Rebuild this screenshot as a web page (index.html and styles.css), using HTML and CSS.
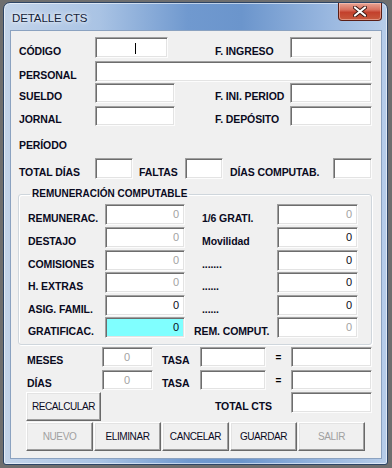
FILE: index.html
```html
<!DOCTYPE html>
<html lang="es">
<head>
    <meta charset="UTF-8"/>
    <title>Detalle CTS</title>
<link rel="stylesheet" href="styles.css">
</head>
<body>
    <div class="window">
        <!-- Title bar -->
        <div class="titlebar">
            <span class="title">DETALLE CTS</span>
            <span class="close">
                <svg width="14" height="11" viewBox="0 0 14 11">
                    <path d="M2 1.5 L12 9.5 M12 1.5 L2 9.5" stroke="#3a1a16" stroke-width="4" stroke-linecap="round"/>
                    <path d="M2 1.5 L12 9.5 M12 1.5 L2 9.5" stroke="#fff" stroke-width="2.2" stroke-linecap="round"/>
                </svg>
            </span>
        </div>

        <div class="client">
            <!-- Datos del trabajador -->
            <div class="row h21">
                <span class="lbl w76">CÓDIGO</span>
                <div class="txt w73"><span class="caret"></span></div>
                <span class="lbl w75 ml47">F. INGRESO</span>
                <div class="txt w82"></div>
            </div>
            <div class="row h21 mt3">
                <span class="lbl w76">PERSONAL</span>
                <div class="txt w277"></div>
            </div>
            <div class="row h20 mt1">
                <span class="lbl w76">SUELDO</span>
                <div class="txt w80"></div>
                <span class="lbl w75 ml40">F. INI. PERIOD</span>
                <div class="txt w82"></div>
            </div>
            <div class="row h20 mt3">
                <span class="lbl w76">JORNAL</span>
                <div class="txt w80"></div>
                <span class="lbl w75 ml40">F. DEPÓSITO</span>
                <div class="txt w82"></div>
            </div>
            <div class="row h20 mt6">
                <span class="lbl w76">PERÍODO</span>
            </div>
            <div class="row h21 mt6">
                <span class="lbl w76">TOTAL DÍAS</span>
                <div class="txt w38"></div>
                <span class="lbl w46 ml6">FALTAS</span>
                <div class="txt w38"></div>
                <span class="lbl w103 ml7">DÍAS COMPUTAB.</span>
                <div class="txt w39"></div>
            </div>

            <!-- Remuneracion computable -->
            <fieldset class="group">
                <legend>REMUNERACIÓN COMPUTABLE</legend>
                <div class="row h21">
                    <span class="lbl w77">REMUNERAC.</span>
                    <div class="txt w80 num off">0</div>
                    <span class="lbl w75 ml17">1/6 GRATI.</span>
                    <div class="txt w81 num off">0</div>
                </div>
                <div class="row h21 mt2">
                    <span class="lbl w77">DESTAJO</span>
                    <div class="txt w80 num off">0</div>
                    <span class="lbl w75 ml17">Movilidad</span>
                    <div class="txt w81 num">0</div>
                </div>
                <div class="row h21 mt2">
                    <span class="lbl w77">COMISIONES</span>
                    <div class="txt w80 num off">0</div>
                    <span class="lbl w75 ml17">.......</span>
                    <div class="txt w81 num">0</div>
                </div>
                <div class="row h21 mt1">
                    <span class="lbl w77">H. EXTRAS</span>
                    <div class="txt w80 num off">0</div>
                    <span class="lbl w75 ml17">......</span>
                    <div class="txt w81 num">0</div>
                </div>
                <div class="row h21 mt2">
                    <span class="lbl w77">ASIG. FAMIL.</span>
                    <div class="txt w80 num">0</div>
                    <span class="lbl w75 ml17">......</span>
                    <div class="txt w81 num">0</div>
                </div>
                <div class="row h21 mt1">
                    <span class="lbl w77">GRATIFICAC.</span>
                    <div class="txt w80 num cyan">0</div>
                    <span class="lbl w83 ml9">REM. COMPUT.</span>
                    <div class="txt w81 num off">0</div>
                </div>
            </fieldset>

            <!-- Calculo -->
            <div class="row h20 mt2">
                <span class="lbl w75 ml8">MESES</span>
                <div class="txt w51 center off">0</div>
                <span class="lbl w38 ml9">TASA</span>
                <div class="txt w66"></div>
                <span class="eq">=</span>
                <div class="txt w81"></div>
            </div>
            <div class="row h20 mt3">
                <span class="lbl w75 ml8">DÍAS</span>
                <div class="txt w51 center off">0</div>
                <span class="lbl w38 ml9">TASA</span>
                <div class="txt w66"></div>
                <span class="eq">=</span>
                <div class="txt w81"></div>
            </div>
            <div class="row top mt2">
                <span class="btn recalc">RECALCULAR</span>
                <span class="lbl w76 ml114 tot">TOTAL CTS</span>
                <div class="txt w81 tall"></div>
            </div>
            <div class="buttons">
                <span class="btn disabled">NUEVO</span>
                <span class="btn">ELIMINAR</span>
                <span class="btn">CANCELAR</span>
                <span class="btn">GUARDAR</span>
                <span class="btn disabled">SALIR</span>
            </div>
        </div>
    </div>
</body>
</html>
```

FILE: styles.css
```css
* {
    margin: 0;
    padding: 0;
    box-sizing: border-box;
}

body {
    width: 392px;
    height: 468px;
    overflow: hidden;
    background: #6e6e6e;
    font: 11px "Liberation Sans", Arial, sans-serif;
    color: #000;
}

/* Aero style window frame */
.window {
    width: 385px;
    height: 463px;
    margin: 2px 0 0 3px;
    padding: 0 5px 5px 6px;
    border: 1px solid #2d4566;
    border-radius: 7px 7px 3px 3px;
    background: linear-gradient(90deg, #c3d4ea 0%, #a9c3e4 25%, #7099cf 48%, #6b95cc 62%, #9ab8e0 85%, #b7cde9 100%);
    box-shadow: inset 0 0 0 1px rgba(255, 255, 255, 0.55);
}

.titlebar {
    display: flex;
    justify-content: space-between;
    align-items: flex-start;
    height: 27px;
}

.title {
    align-self: center;
    padding: 2px 0 0 2px;
    font-size: 11.5px;
    letter-spacing: -0.1px;
    color: #14233a;
    text-shadow: 0 0 6px rgba(255, 255, 255, 0.9), 0 0 3px rgba(255, 255, 255, 0.9);
}

.close {
    display: flex;
    align-items: center;
    justify-content: center;
    width: 44px;
    height: 18px;
    border: 1px solid #5a1e16;
    border-top: 0;
    border-radius: 0 0 4px 4px;
    background: linear-gradient(#e9a595 0%, #d8705e 40%, #c3402c 55%, #c85a3e 100%);
    box-shadow: inset 0 0 0 1px rgba(255, 220, 210, 0.45);
}

/* Client area */
.client {
    width: 372px;
    height: 429px;
    padding: 6px 0 0 8px;
    background: #f0f0f0;
    border: 1px solid #8ba2c0;
}

.row {
    display: flex;
    align-items: stretch;
}

.row.top {
    align-items: flex-start;
}

.h20 { height: 20px; }
.h21 { height: 21px; }

.mt1 { margin-top: 1px; }
.mt2 { margin-top: 2px; }
.mt3 { margin-top: 3px; }
.mt6 { margin-top: 6px; }

.lbl {
    align-self: flex-end;
    padding-bottom: 1px;
    font-weight: bold;
    font-size: 10.5px;
    line-height: 12px;
    letter-spacing: -0.1px;
    white-space: nowrap;
    color: #0a0a1e;
}

.w38 { width: 38px; }
.w39 { width: 39px; }
.w46 { width: 46px; }
.w51 { width: 51px; }
.w66 { width: 66px; }
.w73 { width: 73px; }
.w75 { width: 75px; }
.w76 { width: 76px; }
.w77 { width: 77px; }
.w80 { width: 80px; }
.w81 { width: 81px; }
.w82 { width: 82px; }
.w83 { width: 83px; }
.w103 { width: 103px; }
.w277 { width: 277px; }

.ml6 { margin-left: 6px; }
.ml7 { margin-left: 7px; }
.ml8 { margin-left: 8px; }
.ml9 { margin-left: 9px; }
.ml17 { margin-left: 17px; }
.ml40 { margin-left: 40px; }
.ml47 { margin-left: 47px; }
.ml114 { margin-left: 114px; }

/* Sunken text boxes */
.txt {
    display: flex;
    background: #fff;
    border: 1px solid;
    border-color: #a0a0a0 #fcfcfc #fcfcfc #a0a0a0;
    box-shadow: inset 1px 1px #6d6d6d, inset -1px -1px #e3e3e3;
    font-size: 11px;
    line-height: 14px;
    padding: 2px 5px 0 4px;
    color: #0a0a20;
}

.txt.num { justify-content: flex-end; }
.txt.center { justify-content: center; }
.txt.off { color: #a3a3a3; }
.txt.cyan { background: #80ffff; }
.txt.tall { height: 21px; }

.caret {
    width: 1px;
    height: 11px;
    margin: 3px 0 0 35px;
    background: #000;
}

.eq {
    width: 25px;
    text-align: center;
    align-self: center;
    font-weight: bold;
    font-size: 10px;
}

/* Group box */
.group {
    width: 354px;
    margin: 9px 0 0 -1px;
    padding: 4px 0 6px 9px;
    border: 1px solid #cfd6dc;
    border-radius: 3px;
    box-shadow: 1px 1px #fff, inset 1px 1px #fff;
}

.group legend {
    margin-left: 2px;
    padding: 0 2px;
    font-weight: bold;
    font-size: 10px;
    line-height: 12px;
    color: #0a0a1e;
}

/* Raised buttons */
.btn {
    display: flex;
    align-items: center;
    justify-content: center;
    height: 29px;
    width: 67px;
    background: #f0f0f0;
    border: 1px solid;
    border-color: #fff #696969 #696969 #fff;
    box-shadow: inset -1px -1px #a0a0a0, inset 1px 1px #e3e3e3;
    font-size: 10px;
    letter-spacing: -0.4px;
    color: #0a0a1e;
}

.btn.disabled {
    color: #a0a0a0;
}

.btn.recalc {
    width: 75px;
    margin-left: 7px;
}

.lbl.tot {
    align-self: flex-start;
    margin-top: 8px;
}

.buttons {
    display: flex;
    gap: 1px;
    margin: 1px 0 0 7px;
}
```
